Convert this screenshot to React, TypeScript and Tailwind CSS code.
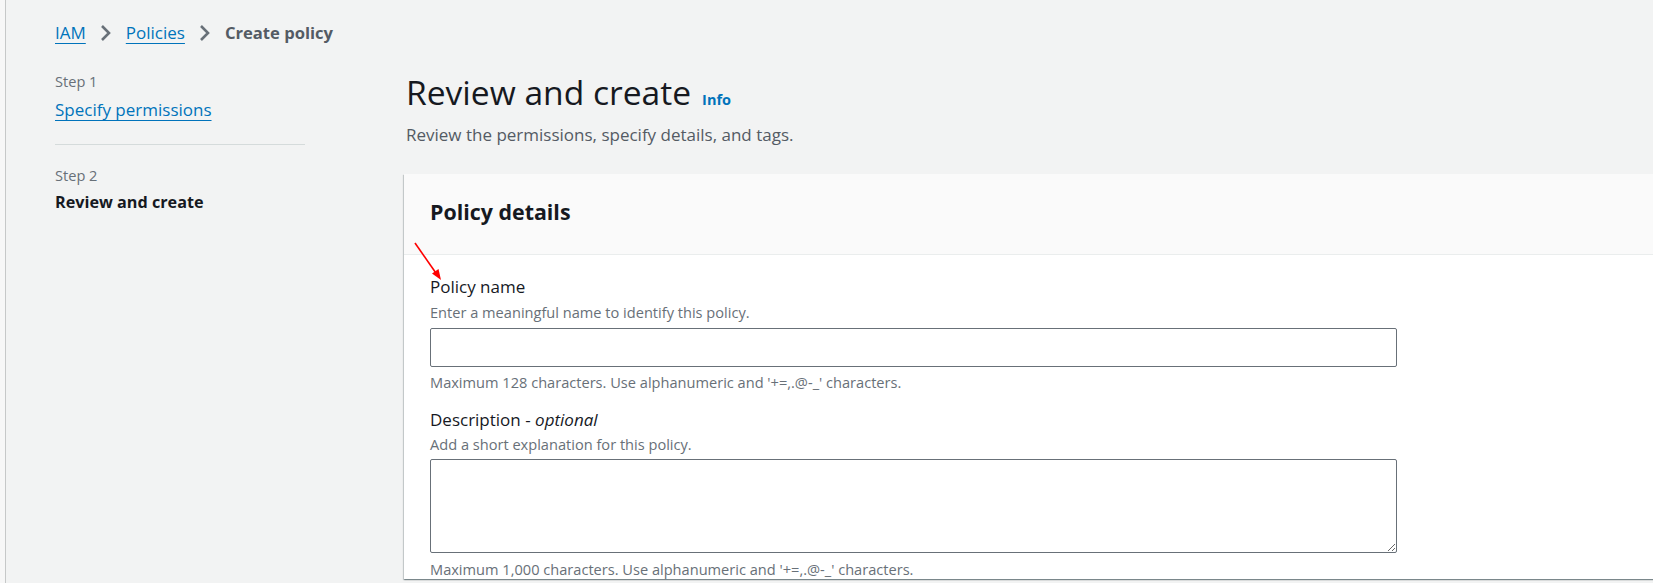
import React from "react";

const FONT = '"Open Sans", "Noto Sans", sans-serif';

function Chevron() {
  return (
    <svg width="14" height="18" viewBox="0 0 14 18" fill="none" stroke="#687078" strokeWidth="2.6">
      <path d="M3 2l7 7-7 7" />
    </svg>
  );
}

export default function App() {
  return (
    <div className="relative h-[583px] w-full overflow-hidden bg-[#f7f7f7] pl-[5px]" style={{ fontFamily: FONT }}>
      <div className="h-full border-l border-[#c6c8c8] bg-[#f2f3f3]">
        {/* Breadcrumb */}
        <div className="flex items-center pl-[49px] pt-[20px] text-[17px] leading-[25px]">
          <a className="text-[#0073bb] underline underline-offset-[4px]">IAM</a>
          <span className="mx-[13px] flex items-center"><Chevron /></span>
          <a className="text-[#0073bb] underline underline-offset-[4px]">Policies</a>
          <span className="mx-[13px] flex items-center"><Chevron /></span>
          <span className="text-[16.6px] font-bold text-[#545b64]">Create policy</span>
        </div>

        <div className="mt-[25px] flex">
          {/* Left nav */}
          <div className="w-[398px] shrink-0 pl-[49px] pr-[99px]">
            <div className="mt-[1px] text-[14.6px] leading-[20px] text-[#687078]">Step 1</div>
            <a className="mt-[6px] block text-[17px] leading-[25px] text-[#0073bb] underline underline-offset-[4px]">Specify permissions</a>
            <div className="mt-[22px] h-px bg-[#d5dbdb]" />
            <div className="mt-[20px] text-[14.6px] leading-[20px] text-[#687078]">Step 2</div>
            <div className="mt-[5px] text-[16.2px] font-bold leading-[25px] text-[#16191f]">Review and create</div>
          </div>

          {/* Main */}
          <div className="min-w-0 flex-1">
            <div className="flex items-baseline pl-[2px]">
              <h1 className="text-[33.6px] font-normal leading-[45px] text-[#16191f]">Review and create</h1>
              <a className="ml-[11px] text-[14.5px] font-bold text-[#0073bb]">Info</a>
            </div>
            <p className="mt-[7px] pl-[2px] text-[17px] leading-[25px] text-[#545b64]">
              Review the permissions, specify details, and tags.
            </p>

            <div className="mt-[27px] w-[1400px] bg-white shadow-[0_1px_1px_0_rgba(0,28,36,0.3),1px_1px_1px_0_rgba(0,28,36,0.15),-1px_1px_1px_0_rgba(0,28,36,0.15)]">
              <div className="h-[81px] border-b border-[#eaeded] bg-[#fafafa] px-[26px] pt-[24px]">
                <h2 className="text-[21.4px] font-bold leading-[28px] text-[#16191f]">Policy details</h2>
              </div>
              <div className="px-[26px] pt-[19px]">
                <div className="text-[17px] leading-[25px] text-[#16191f]">Policy name</div>
                <div className="mt-[3px] text-[14.6px] leading-[20px] text-[#687078]">Enter a meaningful name to identify this policy.</div>
                <input className="mt-[6px] block h-[39px] w-[967px] rounded-[2px] border border-[#687078] bg-white px-2 outline-none" />
                <div className="mt-[5px] text-[14.6px] leading-[20px] text-[#687078]">
                  Maximum 128 characters. Use alphanumeric and '+=,.@-_' characters.
                </div>
                <div className="mt-[15px] text-[17px] leading-[25px] text-[#16191f]">
                  Description - <i>optional</i>
                </div>
                <div className="mt-[2px] text-[14.6px] leading-[20px] text-[#687078]">Add a short explanation for this policy.</div>
                <textarea className="mt-[5px] block h-[94px] w-[967px] rounded-[2px] border border-[#687078] bg-white px-2 outline-none" />
                <div className="mt-[6px] text-[14.6px] leading-[20px] text-[#687078]">
                  Maximum 1,000 characters. Use alphanumeric and '+=,.@-_' characters.
                </div>
              </div>
            </div>
          </div>
        </div>
      </div>

      {/* Red annotation arrow */}
      <svg className="pointer-events-none absolute left-[408px] top-[238px]" width="40" height="48" viewBox="0 0 40 48">
        <line x1="7" y1="5" x2="30" y2="38" stroke="#ff0000" strokeWidth="1.6" />
        <path d="M33 42 L24 35.5 L30.5 31 Z" fill="#ff0000" />
      </svg>
    </div>
  );
}
